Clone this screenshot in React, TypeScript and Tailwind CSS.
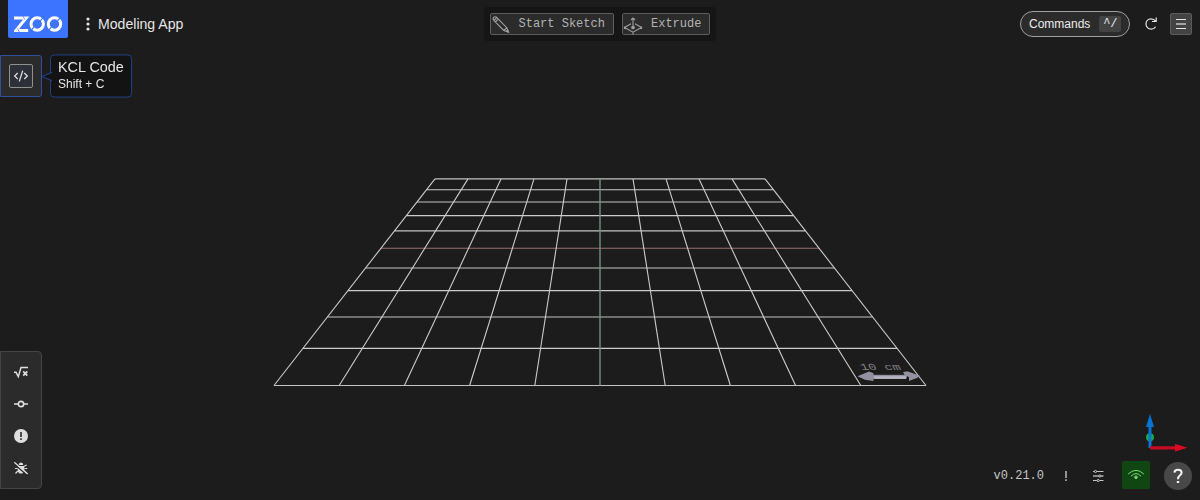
import React from "react";

const ROWS = [178.9, 189.7, 202, 215.6, 230.9, 248.3, 268, 290.6, 317, 348.4, 385.5];
const COLUMNS = [-5, -4, -3, -2, -1, 1, 2, 3, 4, 5];
const halfWidth = (y: number) => 165 + ((y - 178.9) / 206.6) * 161;

function Scene() {
  return (
    <svg className="absolute inset-0" width="1200" height="500" viewBox="0 0 1200 500">
      <g stroke="#cccccc" strokeWidth="1.1">
        {ROWS.map((y, i) => (
          <line
            key={y}
            x1={600 - halfWidth(y)}
            x2={600 + halfWidth(y)}
            y1={y}
            y2={y}
            stroke={i === 5 ? "#967070" : i % 2 ? "#cccccc" : "#c0c3c0"}
          />
        ))}
        {COLUMNS.map((c) => (
          <line key={c} x1={600 + c * 33} y1="178.9" x2={600 + c * 65.2} y2="385.5" />
        ))}
      </g>
      <line x1="600" x2="600" y1="178.9" y2="385.5" stroke="#74927f" strokeWidth="1.4" />
      <text
        x="0"
        y="0"
        transform="matrix(1.18 0 0.4 0.83 861.8 369.8)"
        fontFamily="Liberation Mono, monospace"
        fontSize="11.3"
        fill="#808080"
      >
        10 cm
      </text>
      <path d="M868 371.5L873 371L875 374H904L903 371L908 370.5L912 372.5L908 375H874Z" fill="#111" />
      <path d="M857.5 376.2L869 371.6L873.5 373V374.8H904.5L903 372L907.5 371.2L919.8 375.8L918 377.6L909 381V378.8H873.5V381L865 379.7Z" fill="#92919d" />
      <path d="M874 376.3H906V378.8H874Z" fill="#b5b5c6" />
      <path d="M907 376L909 377.5V381L906.5 379.5Z" fill="#161616" />
      <circle cx="1150" cy="437.3" r="4" fill="#16ad43" />
      <path d="M1148.5 448V427H1146L1150 414L1154 427H1151.5V448Z" fill="#0874d1" />
      <path d="M1150 446.3H1175V444L1187 447.8L1175 451.5V449.4H1150Z" fill="#c60b22" />
      <path d="M1175 444L1187 447.8L1175 451.5Z" fill="#db0923" />
    </svg>
  );
}

function Logo() {
  return (
    <svg width="49" height="17" viewBox="0 0 49 17" fill="none" stroke="white" strokeWidth="3">
      <path d="M0 2H12.2L2 14.4H14.2" />
      <circle cx="23.2" cy="8" r="6.2" />
      <circle cx="40.5" cy="8" r="6.2" />
      <path d="M26.3 4.8L30 .6M16.2 15.4L20 11.2M43.6 4.8L47.3 .6M33.5 15.4L37.3 11.2" stroke="#3c73ff" strokeWidth="1.1" />
      <path d="M9 .2L10.8 3.6M3.5 12.6L5.3 16" stroke="#3c73ff" strokeWidth=".7" />
    </svg>
  );
}

function Header() {
  return (
    <header className="relative grid h-12 grid-cols-3 items-start">
      <div className="flex h-12 pl-2">
        <div className="flex h-[38px] w-[60px] items-end justify-center rounded-b-[2px] bg-[#3c73ff] pb-[5px]">
          <Logo />
        </div>
        <div className="flex h-12 items-center pl-[18px] text-[#e6e6e6]">
          <svg width="4" height="14" viewBox="0 0 4 14" fill="currentColor">
            <circle cx="2" cy="2" r="1.6" />
            <circle cx="2" cy="7" r="1.6" />
            <circle cx="2" cy="12" r="1.6" />
          </svg>
          <span className="pl-2 text-[14.1px] leading-5">Modeling App</span>
        </div>
      </div>
      <div className="flex justify-center pt-[7px]">
        <div className="flex gap-2 rounded bg-[#151515] px-1.5 py-1.5 font-['Liberation_Mono',monospace] text-xs text-[#b3b3b3]">
          <button className="flex h-[22px] w-[124px] items-center rounded-[2px] border border-[#5c5c5c] bg-[#2b2b2b]">
            <svg className="shrink-0" width="20" height="20" viewBox="0 0 20 20" fill="none" stroke="#a0a0a0" strokeWidth="1.1">
              <path d="M2.8 6.5L5.8 3.5L15.8 13.7L17.4 18L12.8 16.5L2.8 6.5Q1.4 4.8 2.4 3.6Q3.8 2 5.8 3.5M4.3 8L7.3 5M12.8 16.5L15.8 13.7" />
              <path d="M15.3 17.3L17.4 18L16.6 15.8Z" fill="#a0a0a0" />
            </svg>
            <span className="pl-[7.5px]">Start Sketch</span>
          </button>
          <button className="flex h-[22px] w-[88px] items-center rounded-[2px] border border-[#5c5c5c] bg-[#2b2b2b]">
            <svg className="shrink-0 overflow-visible" width="20" height="20" viewBox="0 0 20 20" fill="none" stroke="#a0a0a0" strokeWidth="1.1">
              <path d="M8 9.7L1.5 13.5L10 18.2L18.5 13.5L12 9.7M1.5 12.5V15M18.5 12.5V15M10 18V20.5M10 13.5V4M8 6L10 4L12 6" />
              <circle cx="10" cy="13.5" r="1.3" fill="#a0a0a0" />
            </svg>
            <span className="pl-2">Extrude</span>
          </button>
        </div>
      </div>
      <div className="flex h-12 items-center justify-end pr-2">
        <button className="flex h-[26px] w-[110px] items-center rounded-full border border-[#a0a0a0] bg-[#2b2b2b] pl-2 text-xs text-[#ececec]">
          Commands
          <kbd className="ml-[9px] flex h-4 w-[22px] items-center justify-center rounded-[2px] bg-[#434343] pb-px font-['Liberation_Mono',monospace] text-xs">
            ^/
          </kbd>
        </button>
        <svg className="ml-[11px]" width="20" height="20" viewBox="0 0 20 20" fill="none" stroke="#e6e6e6" strokeWidth="1.2">
          <path d="M15.2 3.5V7.5H11M14.8 7.5C13.6 5.7 11.8 4.9 9.9 4.9C7 4.9 5 7.2 5 10C5 12.9 7.2 15.2 10 15.2C11.8 15.2 13.6 14.4 14.6 12.7" />
        </svg>
        <button className="ml-[9px] flex size-[22px] items-center justify-center rounded-[2px] border border-[#5c5c5c] bg-[#434343]">
          <svg width="10" height="12" viewBox="0 0 10 12" stroke="#e6e6e6">
            <path d="M0 1.5H10M0 10.5H10" />
            <path d="M0 6H10" strokeWidth="1.2" />
          </svg>
        </button>
      </div>
    </header>
  );
}

function CodePane() {
  return (
    <div className="relative flex items-start pt-1.5">
      <button className="mt-px flex size-[42px] items-center justify-center rounded-r-[3px] border border-[#304f9f] bg-[#2b2b2b]">
        <span className="flex size-6 items-center justify-center rounded-[2px] border border-[#909090] bg-[#2d3038]">
          <svg width="16" height="14" viewBox="0 0 16 14" fill="none" stroke="#dedede" strokeWidth="1.3">
            <path d="M4.7 4L1.7 7L4.7 10M11.3 4L14.3 7L11.3 10M9.7 1.8L6.3 12.4" />
          </svg>
        </span>
      </button>
      <div className="relative ml-2 h-[43px] w-[82px] translate-y-[.5px] rounded border-[1.3px] border-[#223d82] bg-[#131313] pl-[7px] pt-px text-[#e6e6e6]">
        <svg className="absolute -left-[9px] top-4" width="10" height="10" viewBox="0 0 10 10">
          <path d="M9.5 0V1L1 4.5Q.5 5 1 5.5L9.5 9V10" fill="#131313" stroke="#223d82" strokeWidth="1.2" />
        </svg>
        <div className="whitespace-nowrap text-[14.4px] leading-5 will-change-transform [transform:translateY(.4px)]">KCL Code</div>
        <div className="text-xs leading-[14px] will-change-transform [transform:translateY(.4px)]">Shift + C</div>
      </div>
    </div>
  );
}

function Sidebar() {
  return (
    <aside className="flex h-[138px] w-[42px] flex-col items-center justify-center gap-3 rounded-r border border-[#444] bg-[#2b2b2b] text-[#dedede]">
      <svg width="20" height="20" viewBox="0 0 20 20" fill="none" stroke="currentColor" strokeWidth="1.5">
        <path d="M3 10.3H5L7.3 14.6L10 5.5H17" />
        <path d="M12.2 9.3L16.3 13.7M16.3 9.3L12.2 13.7" strokeWidth="1.7" />
      </svg>
      <svg width="20" height="20" viewBox="0 0 20 20" fill="none" stroke="currentColor" strokeWidth="1.7">
        <circle cx="10" cy="10" r="2.7" />
        <path d="M3 10H7.3M12.7 10H17" strokeWidth="1.5" />
      </svg>
      <svg width="20" height="20" viewBox="0 0 20 20">
        <circle cx="10" cy="10" r="7" fill="currentColor" />
        <path d="M10 6V11M10 12.3V14" stroke="#2b2b2b" strokeWidth="1.6" />
      </svg>
      <svg width="20" height="20" viewBox="0 0 20 20" fill="none" stroke="currentColor" strokeWidth="1.2">
        <path d="M7.7 7Q7.7 4.5 10 4.5Q12.3 4.5 12.3 7ZM6.7 8H13.3V12.5Q12.8 15.6 10 15.6Q7.2 15.6 6.7 12.5Z" fill="currentColor" stroke="none" />
        <path d="M6.5 10.5H4M16.2 10.5H13.5M6.8 13L4.5 15.5M13.2 13L15.5 15.5M13 8.3L15.7 7" />
        <path d="M3 5.8L15.8 17" stroke="#2b2b2b" strokeWidth="1.4" />
        <path d="M3.3 4.3L16.7 16" />
      </svg>
    </aside>
  );
}

function StatusBar() {
  return (
    <div className="flex h-7 items-center self-end pr-2 text-[#c5c5c5]">
      <span className="pt-px font-['Liberation_Mono',monospace] text-xs">v0.21.0</span>
      <svg className="ml-3" width="20" height="20" viewBox="0 0 20 20" stroke="currentColor" strokeWidth="1.4">
        <path d="M10 6V13M10 14.2V16" />
      </svg>
      <svg className="ml-3" width="20" height="20" viewBox="0 0 20 20" fill="#1c1c1c" stroke="currentColor">
        <path d="M5 6.5H15.5M5 15.5H15.5" />
        <path d="M5 11H15.5" strokeWidth="1.3" />
        <circle cx="7.5" cy="6.5" r="1.1" />
        <circle cx="11.8" cy="11" r="1.1" />
        <circle cx="10.2" cy="15.5" r="1.1" />
      </svg>
      <div className="ml-3.5 flex size-7 items-center justify-center rounded-[2px] bg-[#104611] text-[#79dd79]">
        <svg width="20" height="20" viewBox="0 0 20 20" fill="none" stroke="currentColor">
          <path d="M2.2 9Q10 1.8 17.8 9M5 11.2Q10 6 15 11.2" />
          <path d="M7.5 12Q10 9 12.5 12" strokeWidth=".5" />
          <circle cx="10" cy="12.5" r="1.5" fill="currentColor" stroke="none" />
        </svg>
      </div>
      <div className="ml-3.5 mt-0.5 flex size-7 shrink-0 items-center justify-center rounded-full bg-[#484848] text-[#f2f2f2]">
        <svg width="16" height="20" viewBox="0 0 16 20" fill="none" stroke="currentColor" strokeWidth="2">
          <path d="M4.4 6.6Q4.6 3.8 8 3.8Q11.6 3.8 11.6 6.6Q11.6 8.2 10 9.3Q8 10.8 8 13.2" />
          <path d="M8 15V17" strokeWidth="2.4" />
        </svg>
      </div>
    </div>
  );
}

export default function App() {
  return (
    <main className="relative flex h-[500px] w-[1200px] flex-col overflow-hidden bg-[#1c1c1c] font-['Liberation_Sans',sans-serif]">
      <Scene />
      <Header />
      <CodePane />
      <footer className="relative mt-auto flex items-center justify-between pb-[11px]">
        <Sidebar />
        <StatusBar />
      </footer>
    </main>
  );
}
